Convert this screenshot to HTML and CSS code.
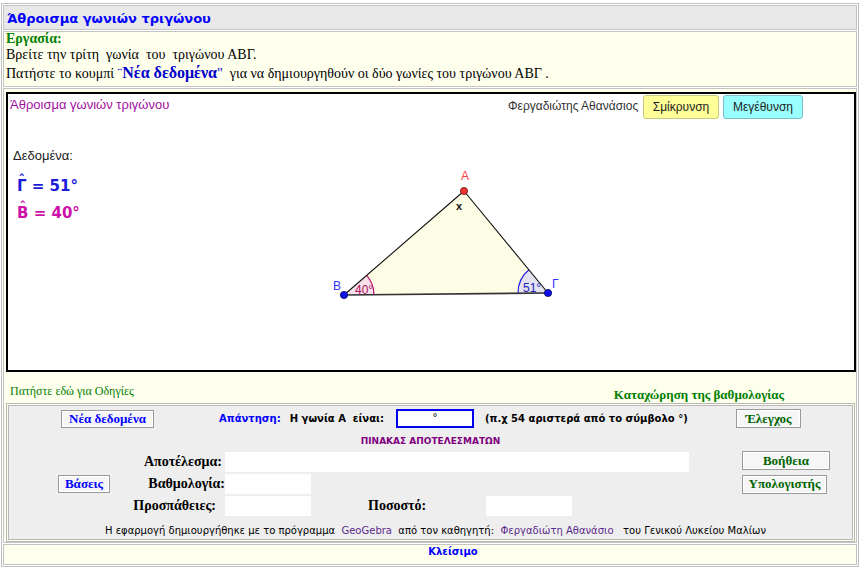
FILE: index.html
```html
<!DOCTYPE html>
<html lang="el">
<head>
<meta charset="utf-8">
<title>Άθροισμα γωνιών τριγώνου</title>
<link rel="stylesheet" href="styles.css">
</head>
<body>
<div class="page">
  <div class="cell head"><h1>Άθροισμα γωνιών τριγώνου</h1></div>

  <div class="cell task">
    <div class="task-title">Εργασία:</div>
    <div class="task-line">Βρείτε την τρίτη&nbsp; γωνία&nbsp; του&nbsp; τριγώνου ΑΒΓ.</div>
    <div class="task-line">Πατήστε το κουμπί <span class="blue">¨<b>Νέα δεδομένα</b>"</span>&nbsp; για να δημιουργηθούν οι δύο γωνίες του τριγώνου ΑΒΓ .</div>
  </div>

  <div class="cell main">
    <div class="applet">
      <svg class="figure" width="846" height="276" viewBox="8 94 846 276" xmlns="http://www.w3.org/2000/svg">
        <polygon points="464,191 344,295 548,293" fill="#fdfde6"/>
        <path d="M344,295 L374,294.7 A30,30 0 0 0 366.7,275.4 Z" fill="#f6e1ea"/>
        <path d="M374,294.7 A30,30 0 0 0 366.7,275.4" fill="none" stroke="#c01070" stroke-width="1.2"/>
        <path d="M548,293 L518,293.3 A30,30 0 0 1 528.9,269.8 Z" fill="#e3e3ef"/>
        <path d="M518,293.3 A30,30 0 0 1 528.9,269.8" fill="none" stroke="#2020e0" stroke-width="1.2"/>
        <line x1="464" y1="191" x2="344" y2="295" stroke="#111" stroke-width="1.1"/>
        <line x1="464" y1="191" x2="548" y2="293" stroke="#111" stroke-width="1.1"/>
        <line x1="344" y1="295" x2="548" y2="293" stroke="#333" stroke-width="1.6"/>
        <circle cx="464" cy="191" r="3.6" fill="#ee3333" stroke="#661111" stroke-width="0.8"/>
        <circle cx="344" cy="295" r="3.6" fill="#1010ee" stroke="#000055" stroke-width="0.8"/>
        <circle cx="548" cy="293" r="3.6" fill="#1010ee" stroke="#000055" stroke-width="0.8"/>
        <text x="461" y="180" class="lbl-a">Α</text>
        <text x="333" y="290" class="lbl-b">Β</text>
        <text x="552" y="288" class="lbl-b">Γ</text>
        <text x="456" y="210" class="lbl-x">x</text>
        <text x="355" y="294" class="lbl-ang40">40°</text>
        <text x="523" y="292" class="lbl-ang51">51°</text>
      </svg>
      <div class="a-title">Άθροισμα γωνιών τριγώνου</div>
      <div class="a-author">Φεργαδιώτης Αθανάσιος</div>
      <button class="a-btn a-small">Σμίκρυνση</button>
      <button class="a-btn a-big">Μεγέθυνση</button>
      <div class="a-data">Δεδομένα:</div>
      <div class="a-eq a-g"><span class="hat">Γ</span> = 51°</div>
      <div class="a-eq a-b"><span class="hat">Β</span> = 40°</div>
    </div>

    <div class="under">
      <span class="help">Πατήστε εδώ για Οδηγίες</span>
      <span class="record">Καταχώρηση της βαθμολογίας</span>
    </div>

    <div class="panel">
      <div class="panel-in">
        <div class="row-a">
          <button class="btn btn-blue btn-new">Νέα δεδομένα</button>
          <span class="ans-label">Απάντηση:</span>
          <span class="ans-q">Η γωνία Α&nbsp; είναι:</span>
          <span class="ans-input">°</span>
          <span class="ans-hint">(π.χ 54 αριστερά από το σύμβολο °)</span>
          <button class="btn btn-green btn-check">Έλεγχος</button>
        </div>
        <div class="table-title">ΠΙΝΑΚΑΣ ΑΠΟΤΕΛΕΣΜΑΤΩΝ</div>
        <div class="results">
          <span class="lab lab-result">Αποτέλεσμα:</span>
          <span class="field field-wide"></span>
          <button class="btn btn-green btn-help">Βοήθεια</button>

          <button class="btn btn-blue btn-bases">Βάσεις</button>
          <span class="lab lab-grade">Βαθμολογία:</span>
          <span class="field field-grade"></span>
          <button class="btn btn-green btn-calc">Υπολογιστής</button>

          <span class="lab lab-tries">Προσπάθειες:</span>
          <span class="field field-tries"></span>
          <span class="lab lab-pct">Ποσοστό:</span>
          <span class="field field-pct"></span>
        </div>
        <div class="credits">Η εφαρμογή δημιουργήθηκε με το πρόγραμμα&nbsp; <span class="purple">GeoGebra</span>&nbsp; από τον καθηγητή:&nbsp; <span class="purple">Φεργαδιώτη Αθανάσιο</span>&nbsp;&nbsp; του Γενικού Λυκείου Μαλίων</div>
      </div>
    </div>
  </div>

  <div class="cell close">Κλείσιμο</div>
</div>
</body>
</html>
```

FILE: styles.css
```css
* { box-sizing: border-box; }

body {
  margin: 3px 0 0 1px;
  background: #fff;
  font-family: "DejaVu Sans", Verdana, sans-serif;
}

.page {
  width: 858px;
  border: 1px solid #c0c0c0;
  padding: 1px;
  display: flex;
  flex-direction: column;
  gap: 1px;
}

.cell { border: 1px solid #c4c4c4; }

/* header */
.head {
  height: 25px;
  background: #e8e8e8;
  padding: 5px 0 0 3px;
}
.head h1 {
  margin: 0;
  font: bold 13px/15px "DejaVu Sans", Verdana, sans-serif;
  color: #0000ff;
}

/* task */
.task {
  height: 56px;
  background: #ffffee;
  padding: 0 2px;
  font: 14px "Liberation Serif", "Times New Roman", serif;
  color: #000;
}
.task-title { line-height: 14px; font-weight: bold; color: #008000; }
.task-line { line-height: 18px; }
.blue { color: #0000cc; }
.blue b { font-size: 16px; }

/* main cell */
.main {
  height: 455px;
  background: #ffffee;
  padding: 3px 0 0 2px;
  display: flex;
  flex-direction: column;
}

.applet {
  position: relative;
  width: 850px;
  height: 280px;
  border: 2px solid #000;
  background: #fff;
  font-family: "Liberation Sans", Arial, sans-serif;
  flex: none;
}
.figure { position: absolute; left: 0; top: 0; }
.lbl-a { font: 12px "Liberation Sans", Arial, sans-serif; fill: #ff4040; }
.lbl-b { font: 12px "Liberation Sans", Arial, sans-serif; fill: #3333ff; }
.lbl-x { font: bold 11px "Liberation Sans", Arial, sans-serif; fill: #111; }
.lbl-ang40 { font: 12px "Liberation Sans", Arial, sans-serif; fill: #b01060; }
.lbl-ang51 { font: 12px "Liberation Sans", Arial, sans-serif; fill: #2020c0; }

.a-title {
  position: absolute; left: 2px; top: 3px;
  font-size: 13px; line-height: 15px; color: #a010a0;
}
.a-author {
  position: absolute; left: 500px; top: 5px;
  font-size: 12px; line-height: 14px; color: #333;
}
.a-btn {
  position: absolute; top: 1px; height: 24px;
  border-radius: 3px;
  font: 12px "Liberation Sans", Arial, sans-serif;
  color: #222;
  padding: 0;
}
.a-small { left: 635px; width: 76px; background: #ffff99; border: 1px solid #c8c87a; }
.a-big { left: 715px; width: 80px; background: #99ffff; border: 1px solid #7ac0c8; }
.a-data {
  position: absolute; left: 5px; top: 54px;
  font-size: 13px; line-height: 15px; color: #222;
}
.a-eq {
  position: absolute; left: 9px;
  font: bold 15px/16px "DejaVu Sans", sans-serif;
  white-space: pre;
}
.a-g { top: 84px; color: #1a1ad8; }
.a-b { top: 111px; color: #cc10a8; }
.hat { position: relative; display: inline-block; }
.hat::before {
  content: "ˆ";
  position: absolute;
  left: 0; right: 0; top: -6px;
  text-align: center;
  font-size: 13px;
}

/* under applet */
.under {
  height: 31px;
  display: flex;
  align-items: flex-start;
  justify-content: space-between;
  flex: none;
}
.help {
  margin: 12px 0 0 4px;
  font: 12px/14px "Liberation Serif", "Times New Roman", serif;
  color: #008000;
}
.record {
  margin: 16px 72px 0 0;
  font: bold 13px/14px "Liberation Serif", "Times New Roman", serif;
  color: #008000;
}

/* panel */
.panel {
  width: 849px;
  height: 139px;
  border: 1px solid #b8b8b8;
  padding: 1px;
  flex: none;
}
.panel-in {
  height: 135px;
  border: 1px solid #b8b8b8;
  background: #eeeeee;
  padding: 3px 0 0 0;
}

.btn {
  font: bold 13px "Liberation Serif", "Times New Roman", serif;
  background: #f6f6f6;
  border: 1px solid #9a9a9a;
  box-shadow: inset 0 0 0 1px #fff;
  padding: 0;
  height: 18px;
  line-height: 14px;
}
.btn-blue { color: #0000ff; }
.btn-green { color: #006400; }

.row-a {
  height: 19px;
  display: flex;
  align-items: center;
}
.btn-new { margin-left: 52px; width: 93px; }
.ans-label {
  margin-left: 65px;
  font: bold 10px "DejaVu Sans", Verdana, sans-serif;
  color: #0000ff;
}
.ans-q {
  margin-left: 9px;
  font: bold 10px "DejaVu Sans", Verdana, sans-serif;
  color: #000;
}
.ans-input {
  margin-left: 12px;
  width: 78px;
  height: 19px;
  border: 2px solid #0000ee;
  background: #fff;
  text-align: center;
  font: 10px/14px "DejaVu Sans", sans-serif;
  color: #000;
}
.ans-hint {
  margin-left: 11px;
  font: bold 10px "DejaVu Sans", Verdana, sans-serif;
  color: #000;
}
.btn-check { margin-left: auto; margin-right: 51px; width: 65px; height: 19px; }

.table-title {
  margin-top: 7px;
  height: 12px;
  text-align: center;
  font: bold 9px/12px "DejaVu Sans", Verdana, sans-serif;
  color: #800080;
}

.results {
  margin-top: 4px;
  display: grid;
  grid-template-columns: 111px 105px 86px 57px 118px 86px 170px auto;
  grid-template-rows: 22px 22px 22px;
  align-items: center;
}
.lab {
  font: bold 14px "Liberation Serif", "Times New Roman", serif;
  color: #000;
}
.lab-result { grid-column: 2; grid-row: 1; justify-self: end; padding-right: 3px; }
.lab-grade { grid-column: 2; grid-row: 2; justify-self: end; }
.lab-tries { grid-column: 2; grid-row: 3; justify-self: end; padding-right: 9px; }
.lab-pct { grid-column: 5; grid-row: 3; }
.field { background: #fff; height: 20px; }
.field-wide { grid-column: 3 / 8; grid-row: 1; width: 464px; }
.field-grade { grid-column: 3; grid-row: 2; }
.field-tries { grid-column: 3; grid-row: 3; }
.field-pct { grid-column: 6; grid-row: 3; }
.btn-help { grid-column: 8; grid-row: 1; width: 88px; height: 19px; align-self: start; }
.btn-bases { grid-column: 1; grid-row: 2; justify-self: end; margin-right: 10px; width: 52px; }
.btn-calc { grid-column: 8; grid-row: 2; width: 85px; height: 19px; }

.credits {
  margin-top: 8px;
  padding-left: 10px;
  text-align: center;
  font: 10px/12px "DejaVu Sans", Verdana, sans-serif;
  color: #000;
  white-space: nowrap;
}
.purple { color: #5c2a8c; }

/* close */
.close {
  height: 21px;
  background: #ffffee;
  padding: 1px 0 0 46px;
  text-align: center;
  font: bold 10px/12px "DejaVu Sans", Verdana, sans-serif;
  color: #0000ff;
}
```
